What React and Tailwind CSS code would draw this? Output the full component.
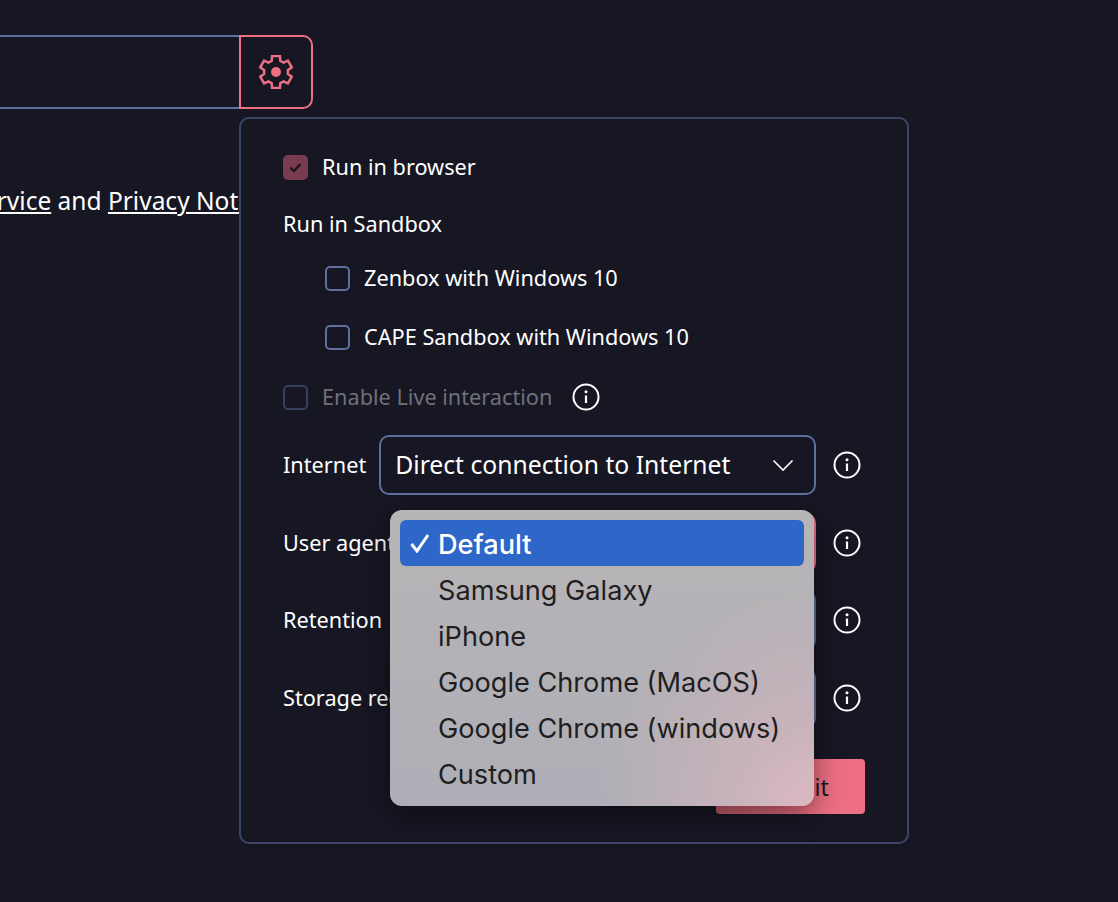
const gearPath = () => {
  const pts = [];
  for (let k = 0; k < 6; k++) {
    const a = (k * Math.PI) / 3;
    const rot = (x, y) => [17 + x * Math.cos(a) - y * Math.sin(a), 17 + x * Math.sin(a) + y * Math.cos(a)];
    pts.push(rot(-4.3, -11.2), rot(-3.9, -16), rot(3.9, -16), rot(4.3, -11.2));
  }
  return "M" + pts.map((p) => p[0].toFixed(2) + " " + p[1].toFixed(2)).join("L") + "Z";
};

function Gear() {
  return (
    <svg width="34" height="34" viewBox="0 0 34 34" fill="none">
      <path d={gearPath()} stroke="#ee6f82" strokeWidth="2.5" strokeLinejoin="miter" />
      <circle cx="17" cy="17" r="5" fill="#ee6f82" />
    </svg>
  );
}

function Info() {
  return (
    <svg width="28" height="28" viewBox="0 0 28 28" fill="none" className="shrink-0">
      <circle cx="14" cy="14" r="12.5" stroke="white" strokeWidth="2" />
      <circle cx="14" cy="8.7" r="1.5" fill="white" />
      <path d="M14 12.5V20" stroke="white" strokeWidth="2.2" />
    </svg>
  );
}

function Box({ children, tone = "border-[#5f6f9e]" }) {
  return <span className={`w-[25px] h-[25px] rounded-[5px] border-2 shrink-0 ${tone}`}>{children}</span>;
}

function FormRow({ label, border = "border-[#5f6f9e]", bg = "", children }) {
  return (
    <div className="flex items-center h-[60px]">
      <span className="shrink-0 whitespace-nowrap mr-[13px]">{label}</span>
      <div className={`flex-1 h-[60px] rounded-[10px] border-2 ${border} ${bg}`}>{children}</div>
      <span className="ml-[17px]"><Info /></span>
    </div>
  );
}

const options = ["Samsung Galaxy", "iPhone", "Google Chrome (MacOS)", "Google Chrome (windows)", "Custom"];

export default function App() {
  return (
    <div className="relative h-[902px] overflow-hidden bg-[#161723] text-white text-[21.7px] leading-[32px] font-['Noto_Sans',sans-serif]">
      <div className="pt-[35px] w-[313px]">
        <div className="flex h-[74px] -ml-2">
          <div className="flex-1 border-y-2 border-[#5f6f9e]" />
          <button className="w-[74px] flex items-center justify-center border-2 border-[#ee6f82] rounded-r-[10px]">
            <Gear />
          </button>
        </div>
        <p className="mt-[76px] whitespace-nowrap -ml-[137px] text-[24.5px]">
          <span className="underline">Terms of Service</span> and <span className="underline">Privacy Notice</span>
        </p>
      </div>

      {/* settings popover */}
      <div className="absolute left-[239px] top-[117px] w-[670px] h-[727px] rounded-[10px] border-2 border-[#3b4666] bg-[#161723] pl-[42px] pr-[46px]">
        <label className="flex items-center gap-[14px] mt-[32px]">
          <span className="w-[25px] h-[25px] rounded-[5px] bg-[#7a3b50] flex items-center justify-center">
            <svg width="13" height="11" viewBox="0 0 13 11" fill="none">
              <path d="M1.5 5.5L5 9L11.5 2" stroke="#161723" strokeWidth="2.4" />
            </svg>
          </span>
          Run in browser
        </label>
        <p className="mt-[25px]">Run in Sandbox</p>
        <label className="flex items-center gap-[14px] ml-[42px] mt-[22px]"><Box />Zenbox with Windows 10</label>
        <label className="flex items-center gap-[14px] ml-[42px] mt-[27px]"><Box />CAPE Sandbox with Windows 10</label>
        <div className="flex items-center mt-[28px]">
          <label className="flex items-center gap-[14px] text-[#6f7079]"><Box tone="border-[#36405e]" />Enable Live interaction</label>
          <span className="ml-[20px]"><Info /></span>
        </div>

        <div className="flex flex-col gap-[17.5px] mt-[22px]">
          <FormRow label="Internet">
            <div className="flex items-center justify-between h-full pl-[14px] pr-[20px] text-[24.7px]">
              Direct connection to Internet
              <svg width="22" height="13" viewBox="0 0 22 13" fill="none">
                <path d="M1.5 1.5L11 11L20.5 1.5" stroke="white" strokeWidth="1.6" />
              </svg>
            </div>
          </FormRow>
          <FormRow label="User agent" border="border-[#ee6f82]" bg="bg-[#c85c6e]" />
          <FormRow label="Retention" />
          <FormRow label="Storage region" />
        </div>

        <div className="flex justify-end mt-[31.5px]">
          <button className="w-[149px] h-[55px] -mr-[4px] rounded-[4px] bg-[linear-gradient(90deg,#c05a6b,#ee6f82_70%)] text-[#161723] text-[23px]">Submit</button>
        </div>
      </div>

      {/* native select menu */}
      <div className="absolute left-[390px] top-[510px] w-[424px] h-[296px] p-[10px] rounded-[12px] shadow-[0_8px_30px_rgba(0,0,0,0.45)] bg-[radial-gradient(circle_at_100%_100%,#dcb9c1_0%,#c8b3bb_16%,rgba(178,177,183,0)_42%),linear-gradient(180deg,#b8b5b7,#aeaeb6)] text-[27.15px] text-[#1e1e20] font-['Inter',sans-serif]">
        <div className="relative h-[46px] rounded-[6px] bg-[#2f67c8] text-white flex items-center pl-[38px] pt-[3px] font-medium">
          <svg width="20" height="20" viewBox="0 0 20 20" fill="none" className="absolute left-[10px] top-[13px]">
            <path d="M1.5 11L7 18L18 2" stroke="white" strokeWidth="3" />
          </svg>
          Default
        </div>
        {options.map((o) => (
          <div key={o} className="h-[46px] flex items-center pl-[38px] pt-[3px] whitespace-nowrap">{o}</div>
        ))}
      </div>
    </div>
  );
}
